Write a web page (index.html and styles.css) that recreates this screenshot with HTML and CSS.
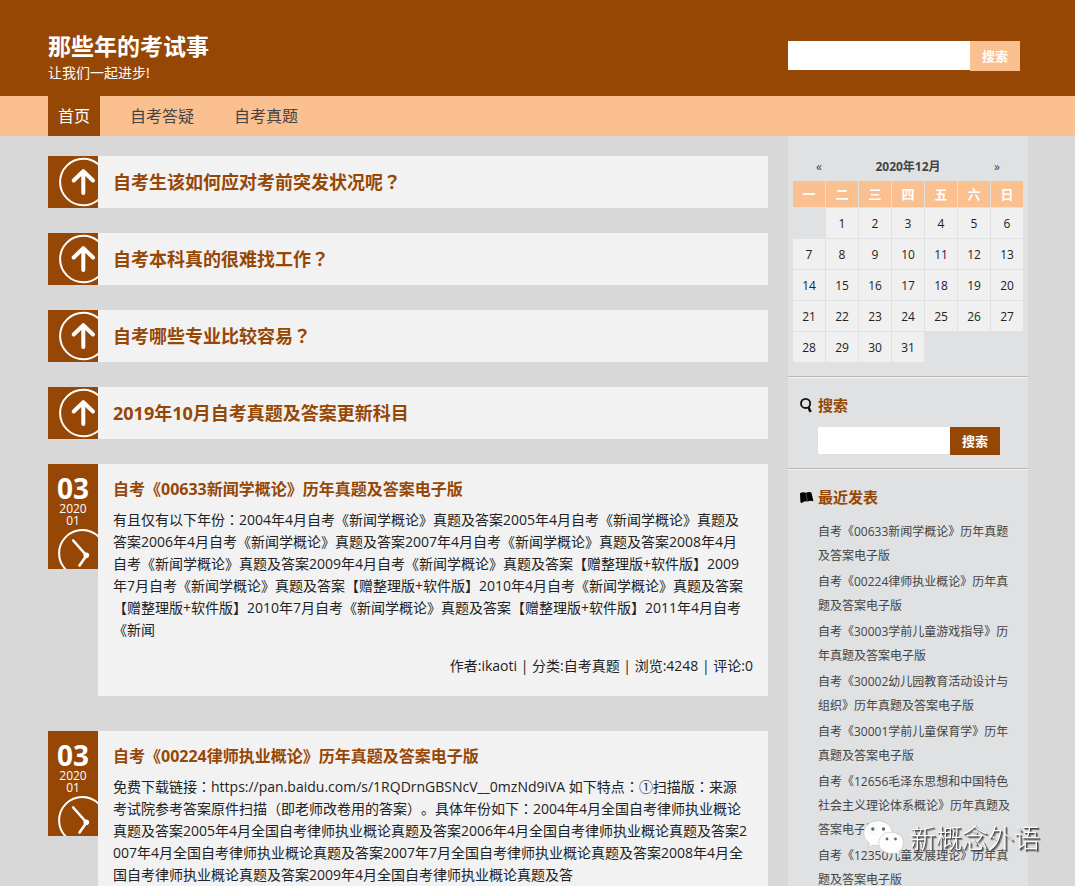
FILE: index.html
```html
<!DOCTYPE html>
<html lang="zh-CN">
<head>
<meta charset="utf-8">
<title>那些年的考试事</title>
<link rel="stylesheet" href="styles.css">
</head>
<body>
<svg class="defs" aria-hidden="true">
  <symbol id="icon-up" viewBox="0 0 50 52">
    <circle cx="35.3" cy="26" r="23.2" fill="none" stroke="#fff" stroke-width="2"/>
    <path d="M35.3 37V16M25.7 24.5 35.3 15.2 45 24.5" fill="none" stroke="#fff" stroke-width="4" stroke-linecap="round" stroke-linejoin="round"/>
  </symbol>
  <symbol id="icon-clock" viewBox="0 3 50 42">
    <circle cx="34.3" cy="29.3" r="23.2" fill="none" stroke="#fff" stroke-width="2"/>
    <path d="M25.2 16.5 38.5 31.5 31.5 41.5" fill="none" stroke="#fff" stroke-width="2.6" stroke-linecap="round"/>
    <circle cx="38.3" cy="31.2" r="2.8" fill="#fff"/>
  </symbol>
</svg>

<header class="header">
  <div class="wrap header-row">
    <div class="brand">
      <h1 class="brand-name">那些年的考试事</h1>
      <p class="brand-tagline">让我们一起进步!</p>
    </div>
    <form class="search search-top">
      <input class="search-input" type="text" aria-label="站内搜索">
      <button class="search-button" type="button">搜索</button>
    </form>
  </div>
</header>

<nav class="nav">
  <div class="wrap nav-row">
    <a class="nav-link active" href="#">首页</a>
    <a class="nav-link" href="#">自考答疑</a>
    <a class="nav-link" href="#">自考真题</a>
  </div>
</nav>

<div class="wrap page">
  <main class="main">
    <article class="sticky">
      <svg class="sticky-icon"><use href="#icon-up"/></svg>
      <h2 class="sticky-title"><a href="#">自考生该如何应对考前突发状况呢<span class="mark" lang="zh-TW">？</span></a></h2>
    </article>
    <article class="sticky">
      <svg class="sticky-icon"><use href="#icon-up"/></svg>
      <h2 class="sticky-title"><a href="#">自考本科真的很难找工作<span class="mark" lang="zh-TW">？</span></a></h2>
    </article>
    <article class="sticky">
      <svg class="sticky-icon"><use href="#icon-up"/></svg>
      <h2 class="sticky-title"><a href="#">自考哪些专业比较容易<span class="mark" lang="zh-TW">？</span></a></h2>
    </article>
    <article class="sticky">
      <svg class="sticky-icon"><use href="#icon-up"/></svg>
      <h2 class="sticky-title"><a href="#">2019年10月自考真题及答案更新科目</a></h2>
    </article>

    <article class="post">
      <div class="date">
        <span class="date-day">03</span>
        <span class="date-part">2020</span>
        <span class="date-part">01</span>
        <svg class="date-icon"><use href="#icon-clock"/></svg>
      </div>
      <div class="post-content">
        <h2 class="post-title"><a href="#">自考《00633新闻学概论》历年真题及答案电子版</a></h2>
        <p class="post-text">有且仅有以下年份<span class="mark" lang="zh-TW">：</span>2004年4月自考《新闻学概论》真题及答案2005年4月自考《新闻学概论》真题及<br>答案2006年4月自考《新闻学概论》真题及答案2007年4月自考《新闻学概论》真题及答案2008年4月<br>自考《新闻学概论》真题及答案2009年4月自考《新闻学概论》真题及答案【赠整理版+软件版】2009<br>年7月自考《新闻学概论》真题及答案【赠整理版+软件版】2010年4月自考《新闻学概论》真题及答案<br>【赠整理版+软件版】2010年7月自考《新闻学概论》真题及答案【赠整理版+软件版】2011年4月自考<br>《新闻</p>
        <p class="post-meta">作者:ikaoti | 分类:自考真题 | 浏览:4248 | 评论:0</p>
      </div>
    </article>

    <article class="post">
      <div class="date">
        <span class="date-day">03</span>
        <span class="date-part">2020</span>
        <span class="date-part">01</span>
        <svg class="date-icon"><use href="#icon-clock"/></svg>
      </div>
      <div class="post-content">
        <h2 class="post-title"><a href="#">自考《00224律师执业概论》历年真题及答案电子版</a></h2>
        <p class="post-text">免费下载链接<span class="mark" lang="zh-TW">：</span>https://pan.baidu.com/s/1RQDrnGBSNcV__0mzNd9iVA 如下特点<span class="mark" lang="zh-TW">：</span>①扫描版<span class="mark" lang="zh-TW">：</span>来源<br>考试院参考答案原件扫描（即老师改卷用的答案）。具体年份如下<span class="mark" lang="zh-TW">：</span>2004年4月全国自考律师执业概论<br>真题及答案2005年4月全国自考律师执业概论真题及答案2006年4月全国自考律师执业概论真题及答案2<br>007年4月全国自考律师执业概论真题及答案2007年7月全国自考律师执业概论真题及答案2008年4月全<br>国自考律师执业概论真题及答案2009年4月全国自考律师执业概论真题及答</p>
      </div>
    </article>
  </main>

  <aside class="sidebar">
    <section class="calendar-block">
      <div class="calendar-nav">
        <a href="#" aria-label="上个月">«</a>
        <strong>2020年12月</strong>
        <a href="#" aria-label="下个月">»</a>
      </div>
      <table class="calendar">
        <thead>
          <tr><th>一</th><th>二</th><th>三</th><th>四</th><th>五</th><th>六</th><th>日</th></tr>
        </thead>
        <tbody>
          <tr><td class="blank"></td><td>1</td><td>2</td><td>3</td><td>4</td><td>5</td><td>6</td></tr>
          <tr><td>7</td><td>8</td><td>9</td><td>10</td><td>11</td><td>12</td><td>13</td></tr>
          <tr><td>14</td><td>15</td><td>16</td><td>17</td><td>18</td><td>19</td><td>20</td></tr>
          <tr><td>21</td><td>22</td><td>23</td><td>24</td><td>25</td><td>26</td><td>27</td></tr>
          <tr><td>28</td><td>29</td><td>30</td><td>31</td><td class="blank" colspan="3"></td></tr>
        </tbody>
      </table>
    </section>

    <section class="widget">
      <h3 class="widget-title">
        <svg class="widget-icon" viewBox="0 0 14 16"><circle cx="5.6" cy="6.4" r="4.6" fill="none" stroke="#111" stroke-width="1.8"/><path d="M8.4 10.2 10.6 15" stroke="#111" stroke-width="2.6" fill="none"/></svg>
        搜索
      </h3>
      <form class="search search-side">
        <input class="search-input" type="text" aria-label="搜索文章">
        <button class="search-button" type="button">搜索</button>
      </form>
    </section>

    <section class="widget">
      <h3 class="widget-title">
        <svg class="widget-icon" viewBox="0 0 14 16"><path d="M0 4.200Q3 2.600 5.800 3.800Q8.600 2.200 11.400 3.400L13.400 12.200Q10.400 11.200 7.800 12.400Q4.600 11.400 1.200 14.200L.4 12.800Z" fill="#000"/><path d="M6 4 7.400 12" stroke="#777" stroke-width=".6"/></svg>
        最近发表
      </h3>
      <ul class="recent">
        <li><a href="#">自考《00633新闻学概论》历年真题<br>及答案电子版</a></li>
        <li><a href="#">自考《00224律师执业概论》历年真<br>题及答案电子版</a></li>
        <li><a href="#">自考《30003学前儿童游戏指导》历<br>年真题及答案电子版</a></li>
        <li><a href="#">自考《30002幼儿园教育活动设计与<br>组织》历年真题及答案电子版</a></li>
        <li><a href="#">自考《30001学前儿童保育学》历年<br>真题及答案电子版</a></li>
        <li><a href="#">自考《12656毛泽东思想和中国特色<br>社会主义理论体系概论》历年真题及<br>答案电子版</a></li>
        <li><a href="#">自考《12350儿童发展理论》历年真<br>题及答案电子版</a></li>
      </ul>
    </section>
  </aside>
</div>

<div class="watermark">
  <svg class="watermark-icon" viewBox="0 0 42 36">
    <g fill="#fff" fill-opacity=".94" stroke="#bbb" stroke-width=".6">
      <path d="M15 .8C6.800.8.8 6.200.8 13.200c0 4.200 2.200 7.600 5.600 9.900L5 27.600l5.100-2.500c1.600.4 3.200.6 4.900.6 8 0 14.400-5.600 14.400-12.500S23 .8 15 .8Z"/>
      <path d="M28.300 12.200c-7 0-12.600 4.700-12.600 10.700S21.300 33.600 28.300 33.600c1.500 0 3-.2 4.300-.6l4.400 2.200-1.200-3.800c3-2 4.900-5 4.900-8.500 0-6-5.500-10.700-12.400-10.700Z"/>
    </g>
    <g fill="#666"><circle cx="9.800" cy="9" r="1.700"/><circle cx="20.500" cy="9" r="1.700"/><circle cx="24" cy="19" r="1.400"/><circle cx="32.500" cy="19" r="1.400"/></g>
  </svg>
  <span>新概念外语</span>
</div>
</body>
</html>
```
FILE: styles.css
```css
* {
  box-sizing: border-box;
}

body {
  margin: 0;
  height: 100vh;
  overflow: hidden;
  background: #d8d8d8;
  color: #222;
  font: 14px/22px "Open Sans", "Noto Sans CJK SC", sans-serif;
  text-spacing-trim: space-all;
}

h1, h2, h3, p, ul {
  margin: 0;
  padding: 0;
}

a {
  color: inherit;
  text-decoration: none;
}

.defs {
  display: none;
}

/* Full-width punctuation centred in its cell */
.mark {
  font-family: "Noto Sans CJK TC", sans-serif;
  line-height: 1;
}

.wrap {
  max-width: 1075px;
  margin: 0 auto;
  padding: 0 47px 0 48px;
}

.header {
  background: #964706;
  color: #fff;
}

.header-row {
  display: flex;
  justify-content: space-between;
  align-items: flex-start;
  min-height: 96px;
}

.brand {
  padding-top: 31px;
}

.brand-name {
  font-size: 23px;
  line-height: 30px;
}

.brand-tagline {
  line-height: 24px;
}

.search {
  display: flex;
  align-items: flex-start;
}

.search-input {
  flex: 1;
  min-width: 0;
  padding: 0 6px;
  border: 0;
  border-radius: 0;
  background: #fff;
  font: inherit;
}

.search-button {
  width: 50px;
  padding: 0;
  border: 0;
  color: #fff;
  font: bold 13px/20px "Open Sans", "Noto Sans CJK SC", sans-serif;
}

.search-top {
  width: 240px;
  padding: 41px 8px 0 0;
}

.search-top .search-input {
  height: 29px;
}

.search-top .search-button {
  height: 30px;
  background: #fac090;
}

.nav {
  background: #fac090;
}

.nav-row {
  display: flex;
  gap: 20px;
}

.nav-link {
  padding: 0 10px;
  color: #444;
  font-size: 16px;
  line-height: 40px;
}

.nav-link.active {
  background: #964706;
  color: #fff;
}

.page {
  display: flex;
  gap: 20px;
}

.main {
  flex: 1;
  min-width: 0;
  padding-top: 20px;
}

.sticky {
  display: flex;
  margin-bottom: 25px;
  background: #f2f2f2;
}

.sticky-icon {
  flex: none;
  width: 50px;
  height: 52px;
  background: #964706;
}

.sticky-title {
  padding-left: 15px;
  color: #964706;
  font-size: 18px;
  line-height: 52px;
}

.post {
  display: flex;
  align-items: flex-start;
  margin-bottom: 35px;
}

.date {
  display: flex;
  flex: none;
  flex-direction: column;
  width: 50px;
  padding-top: 10px;
  background: #964706;
  color: #fff;
  text-align: center;
}

.date-day {
  padding-bottom: 1px;
  font-size: 28px;
  font-weight: bold;
  line-height: 28px;
}

.date-part {
  font-size: 12px;
  line-height: 12px;
}

.date-icon {
  width: 50px;
  height: 42px;
}

.post-content {
  flex: 1;
  min-width: 0;
  padding: 14px 15px 19px;
  background: #f2f2f2;
}

.post-title {
  margin-bottom: 9px;
  color: #964706;
  font-size: 16px;
  line-height: 22px;
}

.post-text {
  white-space: nowrap;
}

.post-meta {
  margin-top: 14px;
  text-align: right;
}

.sidebar {
  width: 240px;
  min-height: 750px;
  background: #dfe1e2;
  color: #444;
}

.calendar-block {
  padding: 20px 4px 13px;
}

.calendar-nav {
  display: grid;
  grid-template-columns: 54px 1fr 54px;
  height: 24px;
  font-size: 12px;
  line-height: 22px;
  text-align: center;
}

.calendar {
  width: 100%;
  border-spacing: 1px;
  table-layout: fixed;
  font-size: 12px;
  text-align: center;
}

.calendar th {
  height: 26px;
  padding: 0;
  background: #fac090;
  color: #fff;
  font-size: 13px;
  line-height: 20px;
}

.calendar td {
  height: 30px;
  padding: 2px 0 0;
  background: #f0f0f0;
  color: #222;
}

.calendar .blank {
  background: none;
}

.widget {
  padding: 15px 18px 13px 12px;
  border-top: 1px solid #b7b7b7;
  box-shadow: inset 0 1px #f4f4f4;
}

.widget-title {
  display: flex;
  align-items: center;
  gap: 4px;
  color: #964706;
  font-size: 15px;
  line-height: 26px;
}

.widget-icon {
  width: 14px;
  height: 16px;
}

.search-side {
  padding: 9px 10px 0 18px;
}

.search-side .search-input {
  height: 27px;
}

.search-side .search-button {
  height: 28px;
  background: #964706;
}

.recent {
  padding: 10px 0 0 18px;
  list-style: none;
  font-size: 12px;
  line-height: 24px;
  white-space: nowrap;
}

.recent li {
  margin-bottom: 2px;
}

.watermark {
  position: fixed;
  right: 35px;
  bottom: 29px;
  display: flex;
  align-items: center;
  gap: 5px;
  color: #fff;
  font-size: 26px;
  font-weight: 300;
  line-height: 38px;
  text-shadow: 1px 1px 1px #333, 2px 2px 1px #777;
}

.watermark-icon {
  width: 42px;
  height: 36px;
}
```
